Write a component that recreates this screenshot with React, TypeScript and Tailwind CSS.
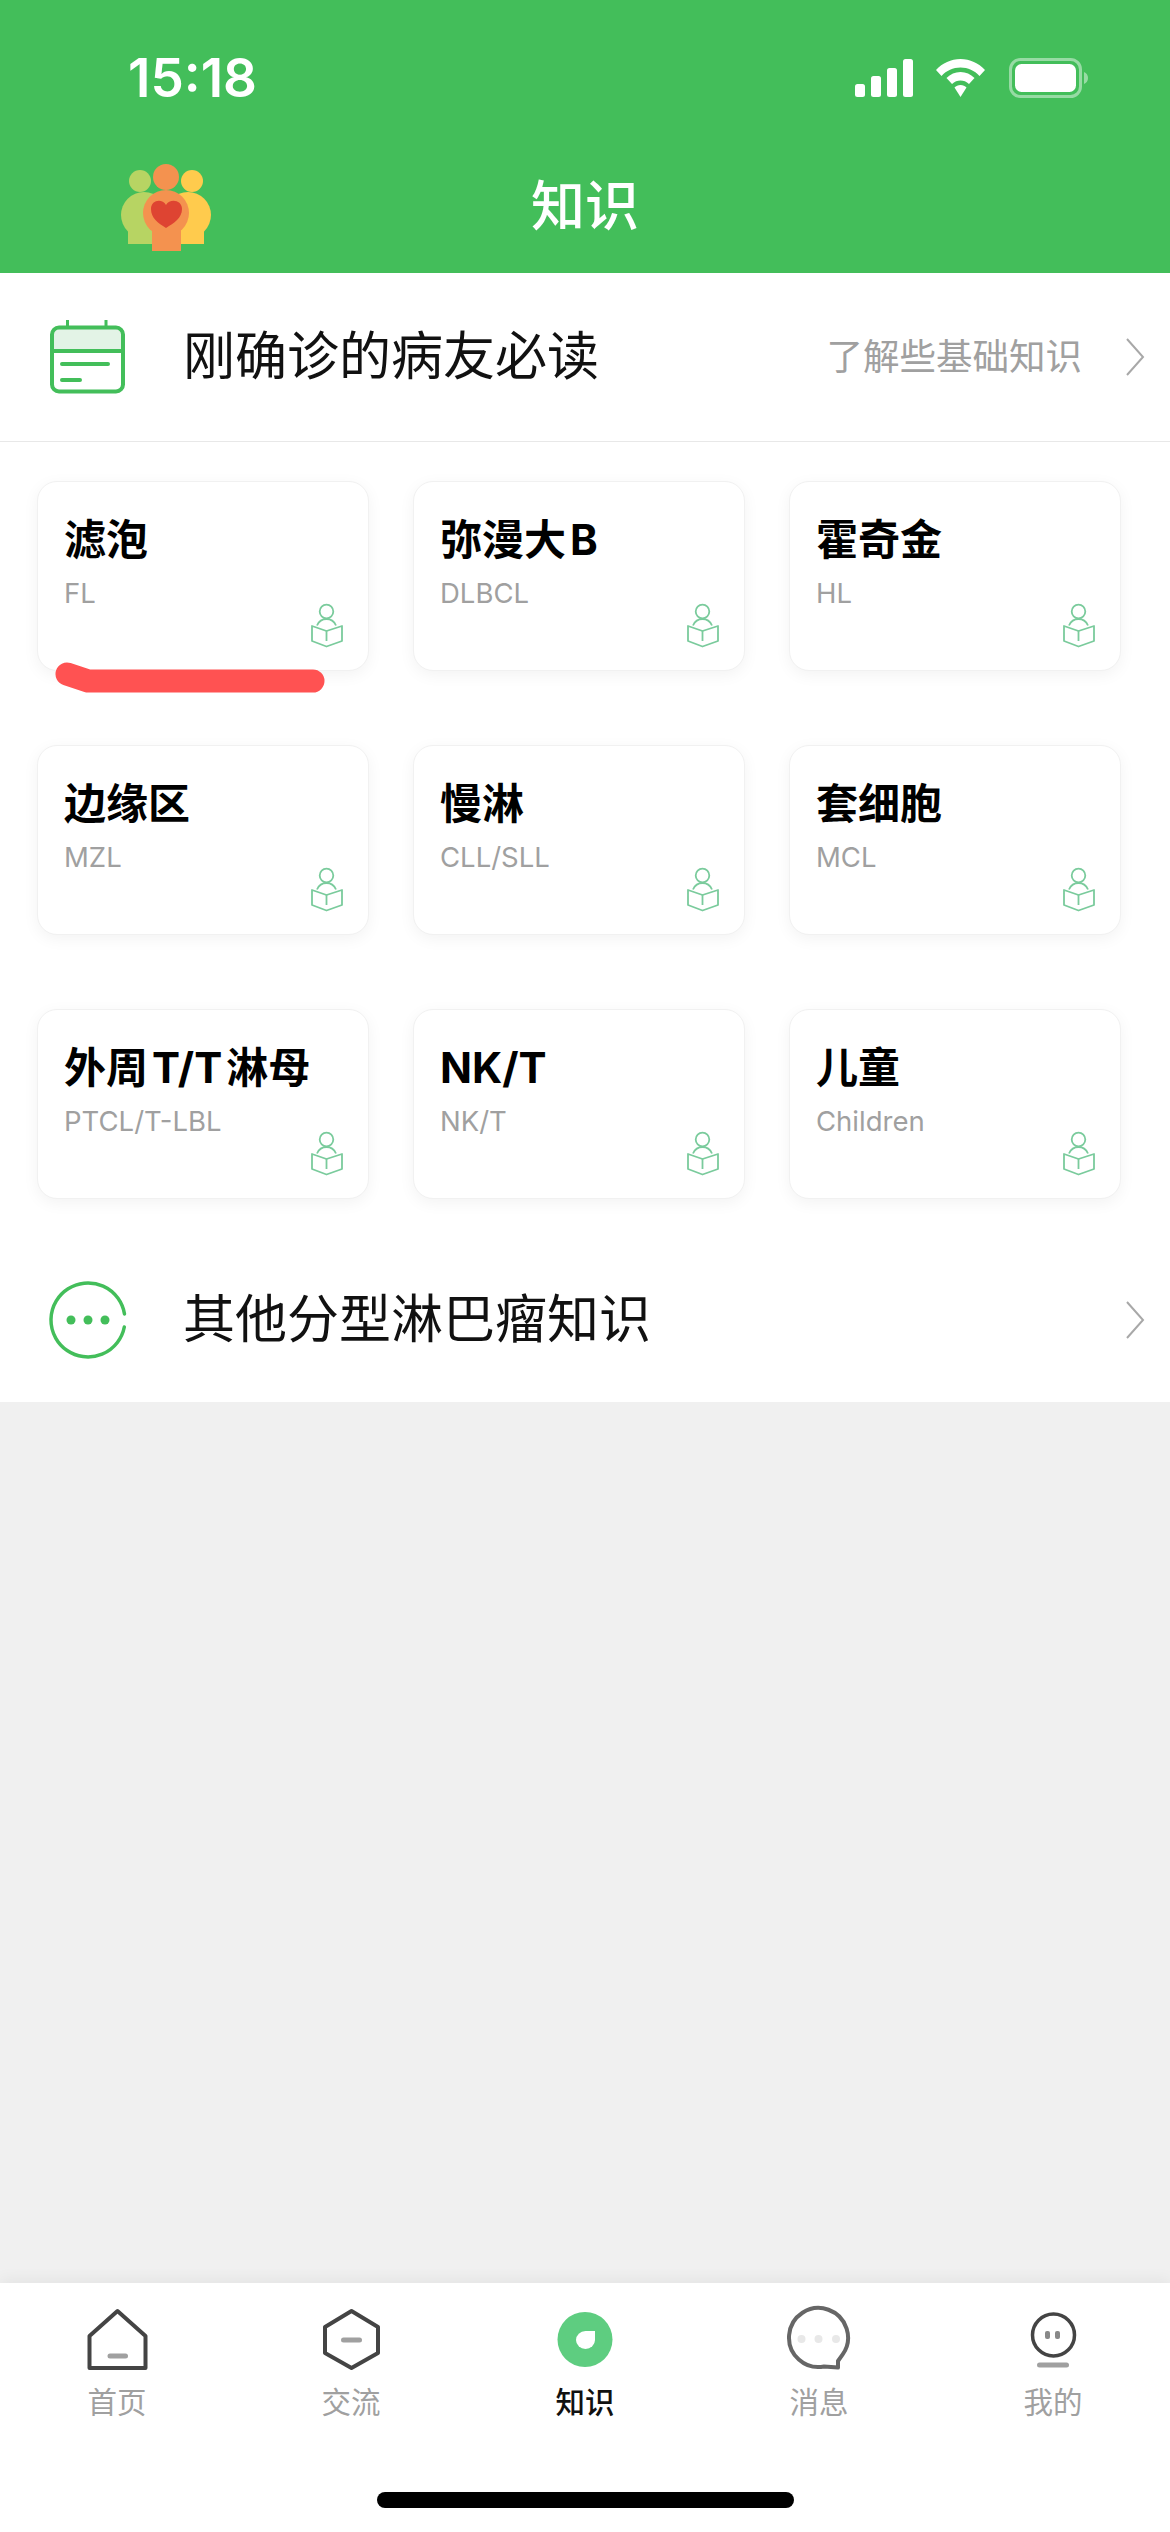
const cards = [
  { title: "滤泡", sub: "FL" },
  { title: "弥漫大 B", sub: "DLBCL" },
  { title: "霍奇金", sub: "HL" },
  { title: "边缘区", sub: "MZL" },
  { title: "慢淋", sub: "CLL/SLL" },
  { title: "套细胞", sub: "MCL" },
  { title: "外周 T/T 淋母", sub: "PTCL/T-LBL" },
  { title: "NK/T", sub: "NK/T" },
  { title: "儿童", sub: "Children" },
];

function Logo() {
  return (
    <svg width="92" height="90" viewBox="20 22 92 90">
      <circle cx="40" cy="41" r="11" fill="#B7D463" />
      <circle cx="44" cy="75" r="23" fill="#B7D463" />
      <rect x="28" y="80" width="30" height="24" fill="#B7D463" />
      <circle cx="92" cy="41" r="11" fill="#FFCB4D" />
      <circle cx="88" cy="75" r="23" fill="#FFCB4D" />
      <rect x="75" y="80" width="29" height="24" fill="#FFCB4D" />
      <circle cx="66" cy="37" r="13" fill="#F4924F" />
      <circle cx="66" cy="73" r="23" fill="#F4924F" />
      <rect x="52" y="80" width="29" height="31" fill="#F4924F" />
      <path d="M66 88 C58 83 51 78 51 69 C51 60 62 58 66 65 C70 58 82 60 82 69 C82 78 74 83 66 88Z" fill="#DE4432" />
    </svg>
  );
}

function StatusIcons() {
  return (
    <div className="flex items-center">
      <svg width="58" height="38" viewBox="0 0 58 38">
        <rect x="0" y="25" width="10" height="13" rx="2.5" fill="#fff" />
        <rect x="16" y="17" width="10" height="21" rx="2.5" fill="#fff" />
        <rect x="32" y="9" width="10" height="29" rx="2.5" fill="#fff" />
        <rect x="48" y="0" width="10" height="38" rx="2.5" fill="#fff" />
      </svg>
      <svg className="ml-[23px]" width="49" height="38" viewBox="0 0 49 38">
        <path d="M24.5 0 C34 0 42.5 4 49 11 L43.5 17 C38.5 11.5 32 8.5 24.5 8.5 C17 8.5 10.5 11.5 5.5 17 L0 11 C6.5 4 15 0 24.5 0Z" fill="#fff" />
        <path d="M24.5 13 C30 13 34.5 15 38.5 19 L33 25 C30.5 22.5 27.5 21.5 24.5 21.5 C21.5 21.5 18.5 22.5 16 25 L10.5 19 C14.5 15 19 13 24.5 13Z" fill="#fff" />
        <path d="M24.5 26 C27 26 29 27 30.5 28.5 L24.5 38 L18.5 28.5 C20 27 22 26 24.5 26Z" fill="#fff" />
      </svg>
      <svg className="ml-[24px]" width="79" height="40" viewBox="0 0 79 40">
        <rect x="1.5" y="1.5" width="70" height="37" rx="10" fill="none" stroke="#fff" strokeOpacity="0.45" strokeWidth="3" />
        <rect x="6" y="6" width="61" height="28" rx="6.5" fill="#fff" />
        <path d="M75 14 C77.5 15 79 17 79 20 C79 23 77.5 25 75 26Z" fill="#fff" fillOpacity="0.45" />
      </svg>
    </div>
  );
}

function Chevron() {
  return (
    <svg width="20" height="38" viewBox="0 0 20 38">
      <path d="M2 1 L18 19 L2 37" fill="none" stroke="#a8a8a8" strokeWidth="2" />
    </svg>
  );
}

function CalendarIcon() {
  return (
    <svg width="75" height="74" viewBox="0 0 75 74">
      <path d="M2 31 V14 A7 7 0 0 1 9 7.5 H66 A7 7 0 0 1 73 14 V31Z" fill="#E3F3E6" />
      <rect x="2" y="7.5" width="71" height="64" rx="7" fill="none" stroke="#43BE5A" strokeWidth="4" />
      <path d="M2 31 H73" stroke="#43BE5A" strokeWidth="4" />
      <path d="M17.5 0 V7 M56 0 V7" stroke="#43BE5A" strokeWidth="3" />
      <path d="M12 44 H58 M12 60 H30" stroke="#43BE5A" strokeWidth="4" strokeLinecap="round" />
    </svg>
  );
}

function MoreIcon() {
  return (
    <svg width="80" height="80" viewBox="0 0 80 80">
      <path d="M76.3 47 A37 37 0 1 1 76.5 34" fill="none" stroke="#43BE5A" strokeWidth="3.5" strokeLinecap="round" />
      <circle cx="23" cy="40" r="4.5" fill="#43BE5A" />
      <circle cx="40" cy="40" r="4.5" fill="#43BE5A" />
      <circle cx="57" cy="40" r="4.5" fill="#43BE5A" />
    </svg>
  );
}

function ReaderIcon() {
  return (
    <svg width="34" height="45" viewBox="0 0 34 45" fill="none" stroke="#7ACB9C" strokeWidth="1.8" strokeLinejoin="round">
      <circle cx="16.5" cy="8.5" r="6.8" />
      <path d="M7 22.5 C9 18 12.5 16 16.5 16 C20.5 16 24 18 26 22.5" />
      <path d="M2 23 L16.5 28 L32 23 V38 L16.5 43.5 L2 38Z" />
      <path d="M16.5 28 V38" />
    </svg>
  );
}

function TabIcon({ name }: { name: string }) {
  if (name === "home")
    return (
      <svg width="70" height="66" viewBox="0 0 70 66" fill="none">
        <path d="M35.5 6 L63.5 31 V63 H7.5 V31Z" stroke="#444" strokeWidth="4" strokeLinejoin="round" />
        <path d="M28 51 H43.5" stroke="#a0a0a0" strokeWidth="5" strokeLinecap="round" />
      </svg>
    );
  if (name === "hex")
    return (
      <svg width="70" height="66" viewBox="0 0 70 66" fill="none">
        <path d="M35.5 6 L62 22 V48 L35.5 63 L9 48 V22Z" stroke="#444" strokeWidth="4" strokeLinejoin="round" />
        <path d="M27.5 35 H43.5" stroke="#a0a0a0" strokeWidth="5" strokeLinecap="round" />
      </svg>
    );
  if (name === "know")
    return (
      <svg width="70" height="66" viewBox="0 0 70 66">
        <circle cx="35" cy="34.5" r="27.5" fill="#5ECD80" />
        <path d="M45 26 V35 A9.5 9 0 1 1 35.5 26Z" fill="#fff" />
      </svg>
    );
  if (name === "msg")
    return (
      <svg width="70" height="66" viewBox="0 0 70 66" fill="none">
        <path d="M40 61.5 L54 62.5 V56 L58.7 49.4 A29.5 29.5 0 1 0 40 61.5Z" stroke="#666" strokeWidth="4" strokeLinejoin="round" />
        <circle cx="17.5" cy="34" r="4" fill="#e8e8e8" />
        <circle cx="34.5" cy="34" r="4" fill="#e8e8e8" />
        <circle cx="52" cy="34" r="4" fill="#e8e8e8" />
      </svg>
    );
  return (
    <svg width="70" height="66" viewBox="0 0 70 66" fill="none">
      <circle cx="35.5" cy="30" r="21" stroke="#444" strokeWidth="3.5" />
      <rect x="27" y="26" width="5" height="8" rx="2" fill="#888" />
      <rect x="37" y="26" width="5" height="8" rx="2" fill="#888" />
      <path d="M21.5 60 H48.5" stroke="#a0a0a0" strokeWidth="5" strokeLinecap="round" />
    </svg>
  );
}

const tabs = [
  { icon: "home", label: "首页" },
  { icon: "hex", label: "交流" },
  { icon: "know", label: "知识", active: true },
  { icon: "msg", label: "消息" },
  { icon: "me", label: "我的" },
];

export default function App() {
  return (
    <div className="relative w-[1170px] h-[2532px] flex flex-col bg-[#f0f0f0] overflow-hidden font-['Inter','Noto_Sans_CJK_SC',sans-serif]">
      <header className="h-[273px] shrink-0 bg-[#43BE5A] text-white pt-[58px]">
        <div className="flex items-center justify-between h-[40px] pl-[128px] pr-[82px]">
          <span className="text-[53px] leading-[40px] font-semibold">15:18</span>
          <StatusIcons />
        </div>
        <div className="mt-[54px] h-[110px] grid grid-cols-3 items-center">
          <div className="pl-[120px]">
            <Logo />
          </div>
          <div className="text-center text-[54px] leading-[60px] font-medium">知识</div>
        </div>
      </header>

      <section className="h-[169px] shrink-0 bg-white border-b border-[#e8e8e8] flex items-center pl-[50px] pr-[25px]">
        <CalendarIcon />
        <span className="ml-[58px] text-[52px] leading-[60px] text-[#111]">刚确诊的病友必读</span>
        <span className="ml-auto text-[36.5px] leading-[50px] text-[#a0a0a0]">了解些基础知识</span>
        <span className="ml-[43px] flex">
          <Chevron />
        </span>
      </section>

      <section className="bg-white shrink-0 pt-[39px] h-[960px]">
        <div className="grid grid-cols-[repeat(3,332px)] gap-x-[44px] gap-y-[74px] pl-[37px]">
          {cards.map((c) => (
            <div
              key={c.sub + c.title}
              className="relative h-[190px] rounded-[20px] bg-white border border-[#f1f1f1] shadow-[0_4px_16px_rgba(0,0,0,0.05)] pl-[26px] pt-[34px]"
            >
              <div className="text-[42px] leading-[48px] font-bold text-black whitespace-nowrap [word-spacing:-6px]">{c.title}</div>
              <div className="mt-[14px] text-[27.5px] leading-[30px] text-[#a0a0a0]">{c.sub}</div>
              <div className="absolute right-[24px] bottom-[22px]">
                <ReaderIcon />
              </div>
            </div>
          ))}
        </div>
        <div className="mt-[39px] h-[164px] flex items-center pl-[48px] pr-[25px]">
          <MoreIcon />
          <span className="ml-[55px] text-[52px] leading-[60px] text-[#111]">其他分型淋巴瘤知识</span>
          <span className="ml-auto flex">
            <Chevron />
          </span>
        </div>
      </section>

      <div className="flex-1" />

      <nav className="h-[249px] shrink-0 bg-white flex flex-col shadow-[0_-4px_14px_rgba(0,0,0,0.05)]">
        <div className="grid grid-cols-5 pt-[22px]">
          {tabs.map((t) => (
            <div key={t.label} className="flex flex-col items-center">
              <TabIcon name={t.icon} />
              <span className={`mt-[14px] text-[29.5px] leading-[34px] ${t.active ? "text-[#111] font-medium" : "text-[#a0a0a0]"}`}>
                {t.label}
              </span>
            </div>
          ))}
        </div>
        <div className="mt-auto mb-[24px] mx-auto w-[417px] h-[16px] rounded-full bg-black" />
      </nav>

      <svg className="absolute left-[50px] top-[655px]" width="280" height="45" viewBox="0 0 280 45" fill="none">
        <path d="M17 19 L38 26 H263" stroke="#FF5252" strokeWidth="23" strokeLinecap="round" strokeLinejoin="round" />
      </svg>
    </div>
  );
}
